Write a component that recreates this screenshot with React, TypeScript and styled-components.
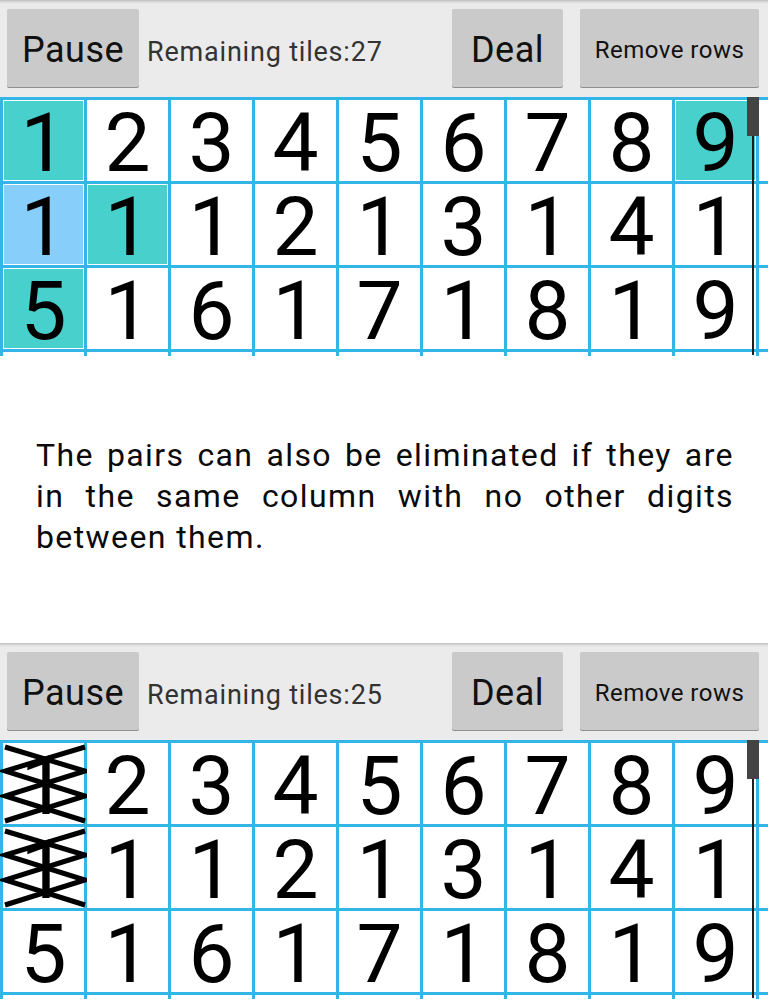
import styled, { createGlobalStyle } from "styled-components";

const GlobalStyle = createGlobalStyle`
  html, body {
    margin: 0;
    padding: 0;
    background: #ffffff;
  }
  body {
    font-family: Roboto, "Noto Sans", "Liberation Sans", sans-serif;
  }
`;

type Tone = "plain" | "pick" | "hint";

interface ICell {
  value: number;
  tone?: Tone;
  crossed?: boolean;
}

const toneColor: Record<Tone, string> = {
  plain: "#ffffff",
  pick: "#48d1cc",
  hint: "#87cefa",
};

const Page = styled.div`
  width: 768px;
  display: flex;
  flex-flow: column;
  overflow: hidden;
`;

const Section = styled.section`
  display: flex;
  flex-flow: column;
`;

const Toolbar = styled.div`
  height: 97px;
  box-sizing: border-box;
  display: flex;
  align-items: flex-start;
  padding: 9px 9px 0 7px;
  background: linear-gradient(#bcbcbc 0, #dcdcdc 2px, #ebebeb 4px, #ebebeb);
`;

const Button = styled.button<{ $size: number; $width: number; $push?: boolean }>`
  width: ${(p) => p.$width}px;
  height: 78px;
  margin-left: ${(p) => (p.$push ? "auto" : "0")};
  padding: 4px 0 0;
  border: none;
  border-radius: 2px;
  background: #cacaca;
  box-shadow: 0 1px 0 #8f8f8f;
  font-family: Roboto, "Noto Sans", sans-serif;
  font-size: ${(p) => p.$size}px;
  letter-spacing: 0.5px;
  color: #111111;
  display: flex;
  align-items: center;
  justify-content: center;
  & + & {
    margin-left: 17px;
  }
`;

const Label = styled.span`
  height: 78px;
  display: flex;
  align-items: center;
  padding-top: 8px;
  box-sizing: border-box;
  margin-left: 8px;
  font-size: 27px;
  letter-spacing: 0.8px;
  color: #333333;
`;

const BoardWrap = styled.div`
  position: relative;
`;

const Board = styled.div`
  display: grid;
  grid-template-columns: repeat(9, 81px) 1fr;
  grid-template-rows: repeat(3, 81px) 4px;
  gap: 3px;
  padding: 3px 0 0 3px;
  background: #33b5e5;
`;

const Cell = styled.div<{ $tone: Tone }>`
  position: relative;
  background: ${(p) => toneColor[p.$tone]};
  box-shadow: ${(p) => (p.$tone === "plain" ? "none" : "inset 0 0 0 1px #ffffff")};
  display: flex;
  align-items: center;
  justify-content: center;
  padding-top: 6px;
  box-sizing: border-box;
  font-size: 82px;
  line-height: 81px;
  color: #000000;
`;

const Filler = styled.div`
  background: #ffffff;
`;

const Cross = styled.svg`
  position: absolute;
  left: 0;
  top: 0;
  width: 84px;
  height: 81px;
  overflow: visible;
`;

const Track = styled.div`
  position: absolute;
  left: 752px;
  top: 0;
  width: 2px;
  height: 258px;
  background: #1e1e1e;
`;

const Thumb = styled.div`
  position: absolute;
  left: 747px;
  top: 0;
  width: 12px;
  height: 39px;
  background: #444444;
`;

const Note = styled.div`
  height: 287px;
  display: flex;
  align-items: center;
  padding: 0 34px 6px 36px;
  box-sizing: border-box;
`;

const NoteText = styled.p`
  margin: 0;
  font-size: 32px;
  line-height: 41px;
  letter-spacing: 1.4px;
  text-align: justify;
  color: #0a0a0a;
`;

const digits = [
  [1, 2, 3, 4, 5, 6, 7, 8, 9],
  [1, 1, 1, 2, 1, 3, 1, 4, 1],
  [5, 1, 6, 1, 7, 1, 8, 1, 9],
];

const firstBoard: ICell[][] = digits.map((row, r) =>
  row.map((value, c) => {
    let tone: Tone = "plain";
    if ((r === 0 && (c === 0 || c === 8)) || (r === 1 && c === 1) || (r === 2 && c === 0)) tone = "pick";
    if (r === 1 && c === 0) tone = "hint";
    return { value, tone };
  })
);

const secondBoard: ICell[][] = digits.map((row, r) =>
  row.map((value, c) => ({ value, crossed: c === 0 && r < 2 }))
);

const CrossMark = () => (
  <Cross viewBox="0 0 84 81">
    <g fill="none" stroke="#000" strokeWidth="5" strokeLinejoin="miter">
      <polyline points="2,4 82,28 2,53 82,78" />
      <polyline points="82,4 2,28 82,53 2,78" />
    </g>
  </Cross>
);

const Game = ({ left, cells }: { left: number; cells: ICell[][] }) => (
  <Section>
    <Toolbar>
      <Button $size={36} $width={132}>Pause</Button>
      <Label>Remaining tiles:{left}</Label>
      <Button $size={36} $width={111} $push>Deal</Button>
      <Button $size={24} $width={179}>Remove rows</Button>
    </Toolbar>
    <BoardWrap>
      <Board>
        {cells.map((row, r) => [
          ...row.map((cell, c) => (
            <Cell key={`${r}-${c}`} $tone={cell.tone || "plain"}>
              {cell.value}
              {cell.crossed && <CrossMark />}
            </Cell>
          )),
          <Filler key={`${r}-end`} />,
        ])}
        {Array.from({ length: 10 }, (_, i) => (
          <Filler key={`tail-${i}`} />
        ))}
      </Board>
      <Track />
      <Thumb />
    </BoardWrap>
  </Section>
);

export default function App() {
  return (
    <>
      <GlobalStyle />
      <Page>
        <Game left={27} cells={firstBoard} />
        <Note>
          <NoteText>
            The pairs can also be eliminated if they are in the same column with no other digits
            between them.
          </NoteText>
        </Note>
        <Game left={25} cells={secondBoard} />
      </Page>
    </>
  );
}
